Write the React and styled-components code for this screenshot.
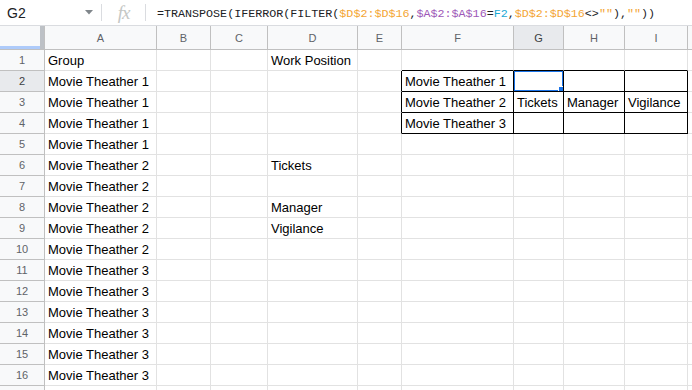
import React from 'react'
import styled, { createGlobalStyle } from 'styled-components'

const GlobalStyle = createGlobalStyle`
  html, body { margin: 0; padding: 0; background: #fff; overflow: hidden; }
  body { font-family: "Liberation Sans", Arial, sans-serif; }
`

const COLS = ['A', 'B', 'C', 'D', 'E', 'F', 'G', 'H', 'I', 'J']
const WIDTHS = '45px 112px 54px 57px 90px 44px 112px 50px 61px 63px 1fr'

const colA = [
  'Group',
  'Movie Theather 1', 'Movie Theather 1', 'Movie Theather 1', 'Movie Theather 1',
  'Movie Theather 2', 'Movie Theather 2', 'Movie Theather 2', 'Movie Theather 2', 'Movie Theather 2',
  'Movie Theather 3', 'Movie Theather 3', 'Movie Theather 3', 'Movie Theather 3', 'Movie Theather 3', 'Movie Theather 3',
  '',
]

const values = {
  D1: 'Work Position',
  D6: 'Tickets',
  D8: 'Manager',
  D9: 'Vigilance',
  F2: 'Movie Theather 1',
  F3: 'Movie Theather 2',
  F4: 'Movie Theather 3',
  G3: 'Tickets',
  H3: 'Manager',
  I3: 'Vigilance',
}

// the black box around F2:I4
const inBox = (c, r) => 'FGHI'.includes(c) && r >= 2 && r <= 4
const rightBlack = (c, r) => inBox(c, r) || (c === 'E' && r >= 2 && r <= 4)
const bottomBlack = (c, r) => inBox(c, r) || ('FGHI'.includes(c) && r === 1)

const Page = styled.div`
  width: 692px;
  height: 390px;
  overflow: hidden;
  display: flex;
  flex-direction: column;
`

const FormulaBar = styled.div`
  height: 26px;
  box-sizing: border-box;
  border-bottom: 1px solid #dadce0;
  display: flex;
  align-items: center;
  flex-shrink: 0;
`

const NameBox = styled.div`
  width: 101px;
  display: flex;
  align-items: center;
  justify-content: space-between;
  padding: 0 8px 0 7px;
  box-sizing: border-box;
  font-size: 14px;
  color: #202124;
`

const Divider = styled.div`
  width: 1px;
  height: 17px;
  background: #dadce0;
`

const Fx = styled.div`
  width: 43px;
  text-align: center;
  font-family: "Liberation Serif", "Times New Roman", serif;
  font-style: italic;
  font-size: 19px;
  color: #c4c7c5;
  letter-spacing: -1px;
`

const Formula = styled.div`
  padding-left: 11px;
  padding-top: 2px;
  font-family: "Liberation Mono", "Courier New", monospace;
  font-size: 11.7px;
  color: #202124;
  white-space: nowrap;
`

const Ref = styled.span`
  color: ${p => p.$c};
`

const Grid = styled.div`
  display: grid;
  grid-template-columns: ${WIDTHS};
  grid-template-rows: 24px repeat(17, 21px);
`

const Corner = styled.div`
  position: relative;
  background: #f8f9fa;
  box-sizing: border-box;
  border-bottom: 1px solid #c0c0c0;
  border-right: 1px solid #c0c0c0;
`

const FreezeBar = styled.div`
  position: absolute;
  ${p => p.$vertical
    ? 'right: 0; top: 0; bottom: 0; width: 4px; background: #bdc1c6;'
    : 'left: 0; right: 4px; bottom: 0; height: 3px; background: #aecbfa;'}
`

const ColHead = styled.div`
  background: ${p => (p.$active ? '#e8eaed' : '#f8f9fa')};
  color: ${p => (p.$active ? '#3c4043' : '#5f6368')};
  box-sizing: border-box;
  border-right: 1px solid #c0c0c0;
  border-bottom: 1px solid #c0c0c0;
  font-size: 11px;
  display: flex;
  align-items: center;
  justify-content: center;
  padding-top: 1px;
`

const RowHead = styled.div`
  background: ${p => (p.$active ? '#e8eaed' : '#f8f9fa')};
  color: ${p => (p.$active ? '#3c4043' : '#5f6368')};
  box-sizing: border-box;
  border-right: 1px solid #c0c0c0;
  border-bottom: 1px solid #c0c0c0;
  font-size: 11px;
  display: flex;
  align-items: center;
  justify-content: center;
`

const Cell = styled.div`
  position: relative;
  box-sizing: border-box;
  border-right: 1px solid ${p => (p.$blackRight ? '#000' : '#e2e2e2')};
  border-bottom: 1px solid ${p => (p.$blackBottom ? '#000' : '#e2e2e2')};
  font-size: 13px;
  color: #000;
  line-height: 21px;
  padding: 0 3px;
  white-space: nowrap;
  overflow: ${p => (p.$clip ? 'hidden' : 'visible')};
`

const Selection = styled.div`
  position: absolute;
  left: -1px;
  top: -1px;
  right: -1px;
  bottom: -1px;
  border: 2px solid #1a73e8;
  pointer-events: none;
`

const Handle = styled.div`
  position: absolute;
  right: -4px;
  bottom: -4px;
  width: 6px;
  height: 6px;
  background: #1a73e8;
  border: 1px solid #fff;
`

const Caret = () => (
  <svg width="8" height="5" viewBox="0 0 8 5">
    <path d="M0 0h8L4 4.5z" fill="#80868b" />
  </svg>
)

export default function App() {
  const rows = Array.from({ length: 17 }, (_, i) => i + 1)
  return (
    <Page>
      <GlobalStyle />
      <FormulaBar>
        <NameBox>
          <span>G2</span>
          <Caret />
        </NameBox>
        <Divider />
        <Fx>fx</Fx>
        <Divider />
        <Formula>
          =TRANSPOSE(IFERROR(FILTER(
          <Ref $c="#f4a533">$D$2:$D$16</Ref>,
          <Ref $c="#9e58b8">$A$2:$A$16</Ref>=
          <Ref $c="#1ca9d4">F2</Ref>,
          <Ref $c="#f4a533">$D$2:$D$16</Ref>&lt;&gt;
          <Ref $c="#f4a533">""</Ref>),
          <Ref $c="#f4a533">""</Ref>))
        </Formula>
      </FormulaBar>
      <Grid>
        <Corner>
          <FreezeBar />
          <FreezeBar $vertical />
        </Corner>
        {COLS.map(c => (
          <ColHead key={c} $active={c === 'G'}>{c === 'J' ? '' : c}</ColHead>
        ))}
        {rows.map(r => (
          <React.Fragment key={r}>
            <RowHead $active={r === 2}>{r < 17 ? r : ''}</RowHead>
            {COLS.map(c => {
              const text = c === 'A' ? colA[r - 1] : values[c + r] || ''
              return (
                <Cell
                  key={c}
                  $blackRight={rightBlack(c, r)}
                  $blackBottom={bottomBlack(c, r)}
                  $clip={inBox(c, r)}
                >
                  {text}
                  {c === 'G' && r === 2 && (
                    <Selection>
                      <Handle />
                    </Selection>
                  )}
                </Cell>
              )
            })}
          </React.Fragment>
        ))}
      </Grid>
    </Page>
  )
}
